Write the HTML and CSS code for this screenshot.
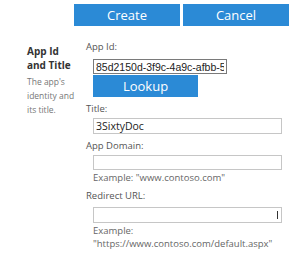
FILE: index.html
```html
<!DOCTYPE html>
<html>
<head>
	<title>New App</title>
	<link rel="stylesheet" href="styles.css">
</head>
<body>
	<div class="actions">
		<button class="btn">Create</button>
		<button class="btn">Cancel</button>
	</div>

	<div class="section">
		<div class="side">
			<h3>App Id<br>and Title</h3>
			<p>The app's identity and its title.</p>
		</div>
		<div class="fields">
			<label>App Id:</label>
			<input class="box short dark" type="text" value="85d2150d-3f9c-4a9c-afbb-5577aa3d">
			<button class="btn lookup">Lookup</button>

			<label class="gap">Title:</label>
			<input class="box title" type="text" value="3SixtyDoc">

			<label class="gap">App Domain:</label>
			<input class="box" type="text" value="">
			<p class="hint">Example: "www.contoso.com"</p>

			<label class="gap">Redirect URL:</label>
			<div class="box url"><span class="caret"></span></div>
			<p class="hint">Example:<br>"https://www.contoso.com/default.aspx"</p>
		</div>
	</div>
</body>
</html>
```
FILE: styles.css
```css
body {
	margin: 0;
	font-family: "Open Sans", "Noto Sans", sans-serif;
	background: #fff;
	color: #555;
	overflow: hidden;
}

.btn {
	display: block;
	width: 106px;
	height: 22px;
	border: 0;
	padding: 0;
	margin: 0;
	background: #2b8ad6;
	color: #fff;
	font-family: "Open Sans", sans-serif;
	font-size: 13px;
}

.actions {
	display: flex;
	gap: 3px;
	margin: 4px 0 0 74px;
}

.section {
	display: flex;
	margin-top: 14px;
}

.side {
	width: 51px;
	padding: 4px 0 0 27px;
}

.side h3 {
	margin: 0;
	font-size: 10px;
	line-height: 14px;
	color: #333;
}

.side p {
	margin: 3px 0 0;
	font-size: 8.5px;
	line-height: 14px;
	color: #777;
}

.fields {
	padding-left: 8px;
	display: flex;
	flex-direction: column;
	align-items: flex-start;
}

.fields label {
	display: block;
	font-size: 9.5px;
	line-height: 14px;
	color: #555;
}

.fields label.gap {
	margin-top: 5px;
}

.box {
	box-sizing: border-box;
	width: 189px;
	height: 15px;
	margin: 2px 0 0 7px;
	padding: 0 2px;
	border: 1px solid #c6c6c6;
	background: #fff;
	font-family: "Open Sans", sans-serif;
	font-size: 10px;
	color: #222;
	outline: none;
}

.short {
	width: 134px;
	margin-top: 5px;
	font-family: "Liberation Sans", Arial, sans-serif;
	font-size: 10.5px;
}

.dark {
	border-color: #7a7a7a;
}

.title {
	height: 16px;
	font-size: 10.5px;
}

.lookup {
	width: 105px;
	margin: 1px 0 0 7px;
}

.url {
	height: 16px;
	position: relative;
	margin-top: 4px;
}

.caret {
	position: absolute;
	right: 3px;
	top: 3px;
	width: 1px;
	height: 8px;
	background: #333;
}

.hint {
	margin: 1px 0 0 7px;
	font-size: 9.5px;
	line-height: 13px;
	color: #666;
}
```
